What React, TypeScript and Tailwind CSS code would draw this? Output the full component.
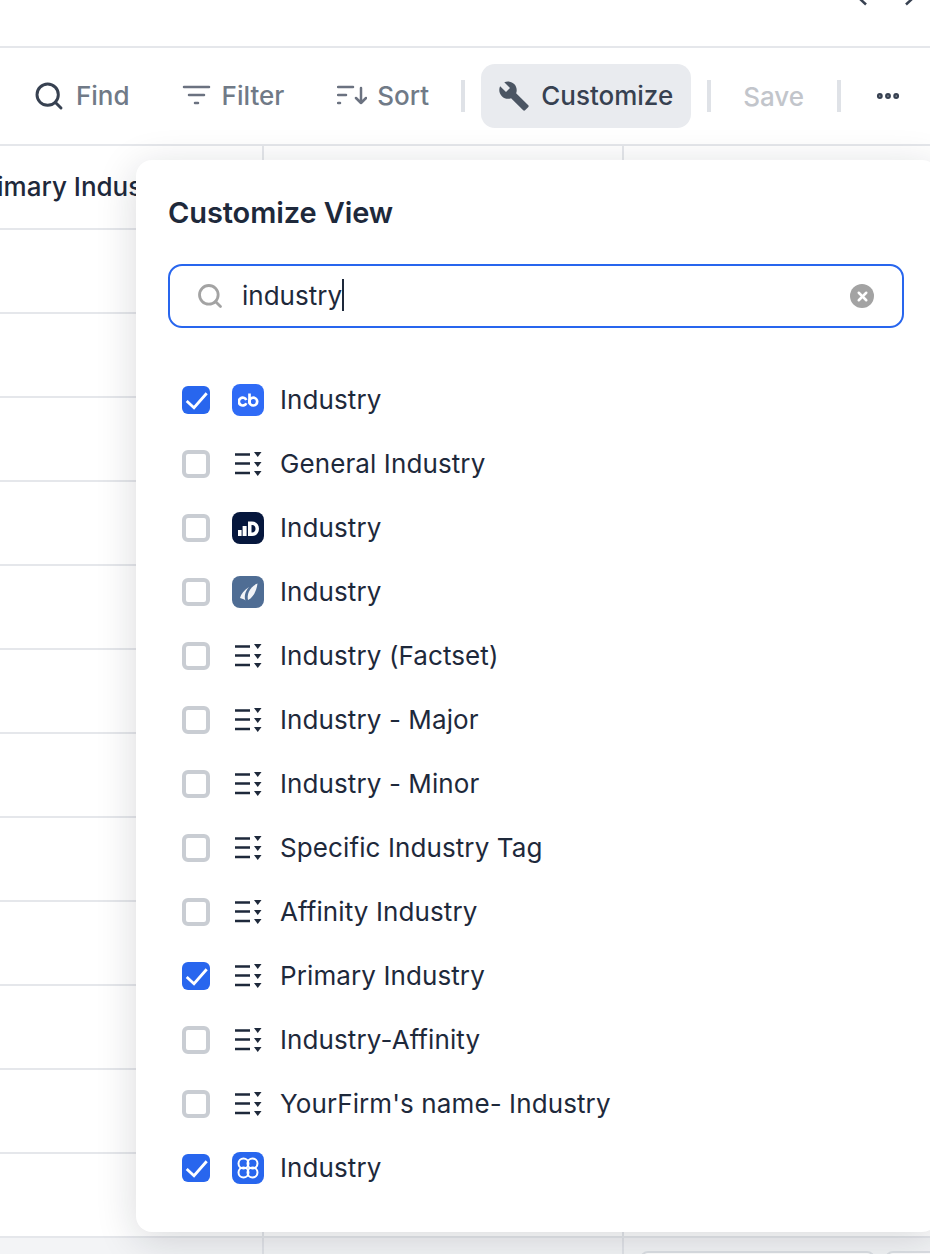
import { Search, MoreHorizontal, X } from "lucide-react";
import { MdBuild } from "react-icons/md";

const OPTIONS = [
  { label: "Industry", icon: "cb", checked: true },
  { label: "General Industry", icon: "list", checked: false },
  { label: "Industry", icon: "dealroom", checked: false },
  { label: "Industry", icon: "leaf", checked: false },
  { label: "Industry (Factset)", icon: "list", checked: false },
  { label: "Industry - Major", icon: "list", checked: false },
  { label: "Industry - Minor", icon: "list", checked: false },
  { label: "Specific Industry Tag", icon: "list", checked: false },
  { label: "Affinity Industry", icon: "list", checked: false },
  { label: "Primary Industry", icon: "list", checked: true },
  { label: "Industry-Affinity", icon: "list", checked: false },
  { label: "YourFirm's name- Industry", icon: "list", checked: false },
  { label: "Industry", icon: "clover", checked: true },
];

const ROW_COUNT = 13;

function ListIcon() {
  return (
    <svg width="32" height="32" viewBox="0 0 32 32" fill="none">
      <path d="M3 6.500h15M3 15.500h15M3 25h15" stroke="#1e293b" strokeWidth="2.400" />
      <path d="M22 4h7.500l-3.750 5zM22 14h7.500l-3.750 5zM22 23h7.500l-3.750 5z" fill="#1e293b" />
    </svg>
  );
}

function SourceIcon({ icon }: { icon: string }) {
  if (icon === "list") return <ListIcon />;
  if (icon === "cb") {
    return (
      <div className="w-8 h-8 rounded-lg bg-[#2f6bf6] flex items-center justify-center">
        <svg width="21" height="15" viewBox="0 0 21 15" fill="none" stroke="white" strokeWidth="2.700">
          <path d="M8.300 7a3.900 3.900 0 1 0 0 3.200" />
          <path d="M11.500 .5v10" />
          <circle cx="15.300" cy="8.600" r="3.900" />
        </svg>
      </div>
    );
  }
  if (icon === "dealroom") {
    return (
      <div className="w-8 h-8 rounded-lg bg-[#06173d] flex items-center justify-center">
        <svg width="21" height="15" viewBox="0 0 21 15" fill="white">
          <rect x="0" y="9" width="3.600" height="6" />
          <rect x="4.600" y="5" width="4" height="10" />
          <path fillRule="evenodd" d="M10 .5h4c4.200 0 7 2.800 7 7.200s-2.800 7.300-7 7.300h-4zM13.500 4v7.500h.7c2 0 3.300-1.500 3.300-3.800S16.200 4 14.200 4z" />
        </svg>
      </div>
    );
  }
  if (icon === "leaf") {
    return (
      <div className="w-8 h-8 rounded-lg bg-[#4f6d94]">
        <svg width="32" height="32" viewBox="0 0 32 32" fill="white" fillOpacity="0.92">
          <path d="M25.500 7.500C21.500 9 18.500 12 17 15.500c-1.500 3.500-1.500 6-1 8.500 5-2 8.500-9 9.500-16.500z" />
          <path d="M17 11C12 14 9 18 8 22c2 .5 4 1 5.500 2.500-1.500-4-.5-9 3.500-13.500z" />
        </svg>
      </div>
    );
  }
  return (
    <div className="w-8 h-8 rounded-lg bg-[#2866ee]">
      <svg width="32" height="32" viewBox="0 0 32 32" fill="none" stroke="white" strokeWidth="2">
        <circle cx="11.500" cy="11.500" r="5" />
        <circle cx="20.500" cy="11.500" r="5" />
        <circle cx="11.500" cy="20.500" r="5" />
        <circle cx="20.500" cy="20.500" r="5" />
      </svg>
    </div>
  );
}

function Checkbox({ checked }: { checked: boolean }) {
  if (checked) {
    return (
      <div className="w-7 h-7 rounded-md bg-[#2866ee]">
        <svg width="28" height="28" viewBox="0 0 28 28" fill="none" stroke="white" strokeWidth="2.800">
          <path d="M4.700 15L12 21.700 24.700 7.300" />
        </svg>
      </div>
    );
  }
  return <div className="w-7 h-7 rounded-md border-4 border-[#c9cdd3] bg-white" />;
}

function ToolButton({ icon, label }: { icon: React.ReactNode; label: string }) {
  return (
    <div className="flex items-center gap-[10px] text-[#707a87]">
      {icon}
      <span className="text-[26px] font-medium leading-8">{label}</span>
    </div>
  );
}

export default function App() {
  return (
    <div className="w-[930px] h-[1254px] overflow-hidden bg-white flex flex-col relative font-['Inter',sans-serif] antialiased">
      {/* top bar, only the tips of the pager arrows are still visible */}
      <div className="h-12 shrink-0 border-b-2 border-[#e5e7eb] flex justify-end pr-[17px] gap-[38px]">
        <svg width="8" height="6" viewBox="0 0 8 6" fill="none" stroke="#374151" strokeWidth="2.500">
          <path d="M0 -2L7 4.500" />
        </svg>
        <svg width="8" height="6" viewBox="0 0 8 6" fill="none" stroke="#374151" strokeWidth="2.500">
          <path d="M8 -2L1 4.500" />
        </svg>
      </div>

      <div className="h-[98px] shrink-0 border-b-2 border-[#e5e7eb] flex items-center pl-[33px]">
        <ToolButton icon={<Search size={32} color="#374151" strokeWidth={2.2} className="mr-px" />} label="Find" />
        <div className="ml-[52px]">
          <ToolButton
            icon={
              <svg width="30" height="30" viewBox="0 0 30 30" fill="none" stroke="#6b7280" strokeWidth="2.500" strokeLinecap="round">
                <path d="M2 6h25M7 14h15M13 22h3" />
              </svg>
            }
            label="Filter"
          />
        </div>
        <div className="ml-[53px]">
          <ToolButton
            icon={
              <svg width="30" height="30" viewBox="0 0 30 30" fill="none" stroke="#6b7280" strokeWidth="2.500" strokeLinecap="round" strokeLinejoin="round">
                <path d="M1 6h15M1 14h8M1 22h2M24 7v15M19 17l5 5 5-5" />
              </svg>
            }
            label="Sort"
          />
        </div>
        <div className="ml-[32px] w-1 h-8 bg-[#dfe2e7]" />
        <div className="ml-[16px] w-[210px] h-16 rounded-[14px] bg-[#e9ebef] flex items-center pl-[17px] gap-[11px] text-[#374151]">
          <MdBuild size={32} color="#4b5563" />
          <span className="text-[26px] font-medium leading-8">Customize</span>
        </div>
        <div className="ml-[16px] w-1 h-8 bg-[#dfe2e7]" />
        <span className="ml-[32px] text-[26px] font-medium text-[#c2c5cb]">Save</span>
        <div className="ml-[33px] w-1 h-8 bg-[#dfe2e7]" />
        <MoreHorizontal className="ml-[33px]" size={28} color="#374151" strokeWidth={3} />
      </div>

      <div className="flex-1 flex flex-col">
        {Array.from({ length: ROW_COUNT }).map((_, i) => (
          <div key={i} className="h-[84px] shrink-0 border-b-2 border-[#e5e7eb] grid grid-cols-[264px_360px_1fr]">
            <div className="border-r-2 border-[#e5e7eb] overflow-hidden whitespace-nowrap">
              {i === 0 && <div className="text-[26px] font-medium text-[#1e293b] -ml-[30px] mt-[21px]">Primary Industry</div>}
            </div>
            <div className="border-r-2 border-[#e5e7eb]" />
            <div />
          </div>
        ))}
        {/* footer row, the pills are cut by the window */}
        <div className="flex-1 bg-[#f3f4f6] grid grid-cols-[264px_360px_1fr] overflow-hidden">
          <div className="border-r-2 border-[#e1e3e8]" />
          <div className="border-r-2 border-[#e1e3e8]" />
          <div className="flex gap-[10px] pl-[16px] pt-[13px]">
            <div className="w-[235px] h-10 shrink-0 rounded-lg border-2 border-[#dcdfe4] bg-white" />
            <div className="w-[60px] h-10 shrink-0 rounded-lg border-2 border-[#dcdfe4] bg-white" />
          </div>
        </div>
      </div>

      <div className="absolute left-[136px] top-[160px] w-[802px] h-[1072px] bg-white rounded-2xl shadow-[0_8px_40px_rgba(17,24,39,0.16)] px-8 pt-[33px]">
        <div className="text-[29px] font-semibold leading-10 tracking-[-0.1px] text-[#1e293b]">Customize View</div>
        <div className="mt-[31px] w-[736px] h-16 rounded-[14px] border-2 border-[#2866ee] flex items-center pl-[26px] pr-[28px]">
          <Search size={28} color="#a3a3a3" strokeWidth={2.4} />
          <div className="ml-[18px] pb-[2px] flex-1 flex items-center text-[26px] text-[#1e293b]">
            industry
            <span className="w-[2px] h-8 bg-[#1e293b]" />
          </div>
          <div className="w-6 h-6 rounded-full bg-[#a3a3a3] flex items-center justify-center">
            <X size={15} color="white" strokeWidth={4} />
          </div>
        </div>
        <div className="mt-[40px] flex flex-col">
          {OPTIONS.map((o, i) => (
            <div key={i} className="h-16 flex items-center pl-[14px]">
              <Checkbox checked={o.checked} />
              <div className="ml-[22px] w-8 h-8">
                <SourceIcon icon={o.icon} />
              </div>
              <span className="ml-4 pb-[2px] text-[26px] text-[#1e293b] tracking-[0.1px]">{o.label}</span>
            </div>
          ))}
        </div>
      </div>
    </div>
  );
}
